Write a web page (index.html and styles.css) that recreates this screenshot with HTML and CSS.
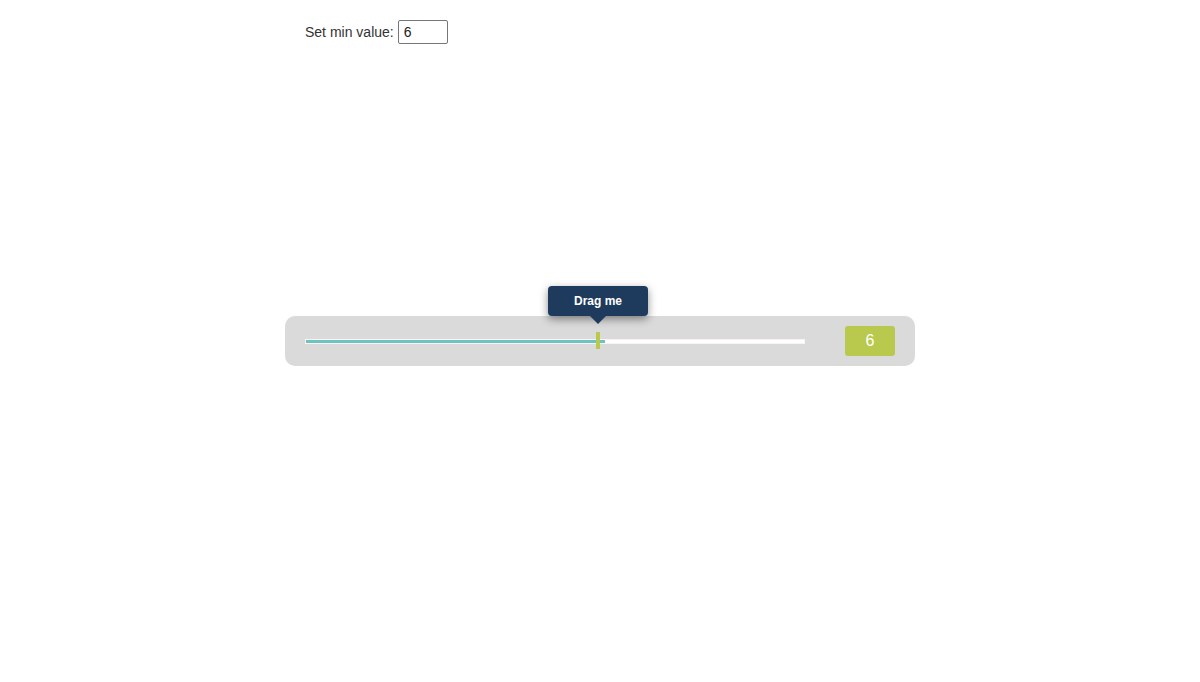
FILE: index.html
```html
<!DOCTYPE html>
<html>
<head>
<meta charset="utf-8">
<link rel="stylesheet" href="styles.css">
</head>
<body>
<div class="wrap">
  <div class="controls">
    <label class="label" for="minv">Set min value:</label>
    <input id="minv" class="num" type="text" value="6">
  </div>
  <div class="slider">
    <div class="track">
      <div class="fill" style="width:60%"></div>
      <div class="thumb" style="left:290px">
        <div class="tip">Drag me</div>
      </div>
    </div>
    <div class="value">6</div>
  </div>
</div>
</body>
</html>
```
FILE: styles.css
```css
html, body {
  margin: 0;
  padding: 0;
  background: #fff;
  font-family: "Liberation Sans", Arial, sans-serif;
}
.wrap {
  width: 630px;
  margin: 0 auto;
  padding-top: 20px;
}
.controls {
  display: flex;
  align-items: center;
  padding-left: 20px;
  height: 24px;
}
.label {
  font-size: 14px;
  color: #333;
  margin-right: 4px;
}
.num {
  box-sizing: border-box;
  width: 50px;
  height: 24px;
  border: 1px solid #767676;
  border-radius: 2px;
  padding: 0 5px;
  font-family: "Liberation Sans", Arial, sans-serif;
  font-size: 14px;
  color: #222;
  outline: none;
}
.slider {
  margin-top: 272px;
  height: 50px;
  box-sizing: border-box;
  background: #dadada;
  border-radius: 10px;
  display: flex;
  align-items: center;
  padding: 0 20px;
}
.track {
  position: relative;
  width: 500px;
  height: 5px;
  box-sizing: border-box;
  border: 1px solid #fbf3f3;
  background: #fff;
}
.fill {
  height: 3px;
  background: #6cc3bf;
}
.thumb {
  position: absolute;
  top: -8px;
  width: 4px;
  height: 17px;
  background: #b8c94c;
}
.tip {
  position: absolute;
  bottom: 33px;
  left: 50%;
  transform: translateX(-50%);
  width: 100px;
  height: 30px;
  background: #1e3a5c;
  color: #fff;
  border-radius: 4px;
  font-size: 12px;
  font-weight: bold;
  display: flex;
  align-items: center;
  justify-content: center;
  box-shadow: 0 3px 8px rgba(0, 0, 0, 0.45);
}
.tip::after {
  content: "";
  position: absolute;
  top: 100%;
  left: 50%;
  margin-left: -8px;
  border-left: 8px solid transparent;
  border-right: 8px solid transparent;
  border-top: 8px solid #1e3a5c;
}
.value {
  margin-left: auto;
  width: 50px;
  height: 30px;
  border-radius: 3px;
  background: #b9c94d;
  color: #fff;
  font-size: 16px;
  display: flex;
  align-items: center;
  justify-content: center;
}
```
